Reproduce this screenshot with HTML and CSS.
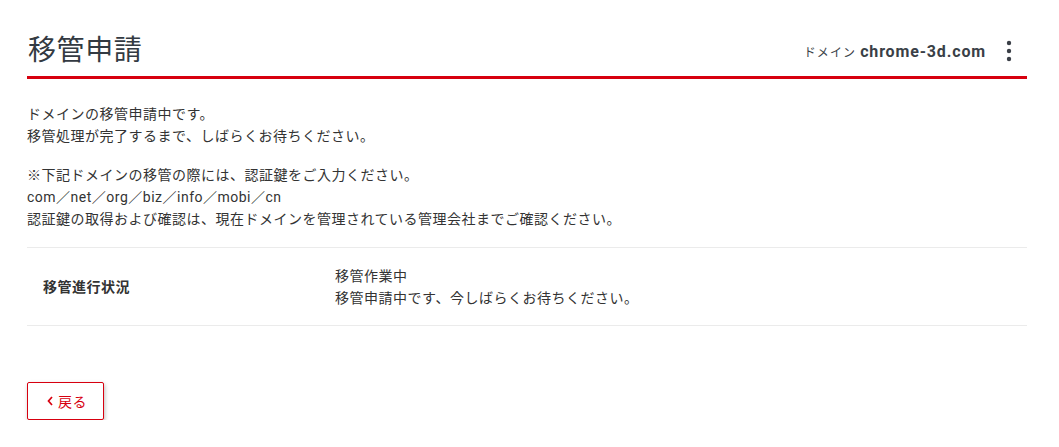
FILE: index.html
```html
<!DOCTYPE html>
<html lang="ja">
<head>
<meta charset="utf-8">
<link rel="stylesheet" href="styles.css">
</head>
<body>
<div class="page">
  <header class="head">
    <h1 class="title">移管申請</h1>
    <div class="domain">
      <span class="domain-label">ドメイン</span>
      <span class="domain-name">chrome-3d.com</span>
      <button class="kebab" aria-label="menu">
        <svg width="6" height="22" viewBox="0 0 6 22"><circle cx="3" cy="3" r="2.2" fill="#3a3f47"/><circle cx="3" cy="11" r="2.2" fill="#3a3f47"/><circle cx="3" cy="19" r="2.2" fill="#3a3f47"/></svg>
      </button>
    </div>
  </header>
  <div class="body">
    <p class="para">ドメインの移管申請中です。<br>移管処理が完了するまで、しばらくお待ちください。</p>
    <p class="para">※下記ドメインの移管の際には、認証鍵をご入力ください。<br>com／net／org／biz／info／mobi／cn<br>認証鍵の取得および確認は、現在ドメインを管理されている管理会社までご確認ください。</p>
    <table class="status">
      <tr>
        <th>移管進行状況</th>
        <td>移管作業中<br>移管申請中です、今しばらくお待ちください。</td>
      </tr>
    </table>
    <button class="back">
      <svg width="8" height="10" viewBox="0 0 8 10"><path d="M6 1 L2.5 5 L6 9" fill="none" stroke="#d7000f" stroke-width="1.7"/></svg>
      <span>戻る</span>
    </button>
  </div>
</div>
</body>
</html>
```
FILE: styles.css
```css
* { box-sizing: border-box; }
html, body { margin: 0; padding: 0; background: #fff; }
body {
  font-family: Roboto, "Noto Sans CJK JP", sans-serif;
  color: #333;
}
.page {
  width: 1000px;
  margin-left: 27px;
  padding-top: 28px;
}
.head {
  display: flex;
  align-items: center;
  justify-content: space-between;
  border-bottom: 3px solid #d7000f;
  height: 51px;
  padding-bottom: 2px;
}
.title {
  margin: 0;
  font-size: 28px;
  font-weight: 400;
  line-height: 40px;
  letter-spacing: 0.6px;
  padding-left: 1px;
  color: #333a42;
}
.domain {
  display: flex;
  align-items: center;
}
.domain-label {
  font-size: 12px;
  letter-spacing: 1.1px;
  color: #3a3f47;
  margin-right: 4px;
}
.domain-name {
  font-size: 16px;
  font-weight: 700;
  color: #3a3f47;
  letter-spacing: 0.85px;
}
.kebab {
  border: 0;
  background: none;
  padding: 0;
  margin-left: 18px;
  margin-right: 13px;
  width: 10px;
  height: 24px;
  display: flex;
  align-items: center;
  justify-content: center;
}
.body { padding-top: 24px; }
.para {
  margin: 0 0 17px;
  font-size: 14px;
  line-height: 22px;
  letter-spacing: 0.5px;
  color: #333;
}
.status {
  width: 100%;
  border-collapse: collapse;
  border-top: 1px solid #ebebeb;
  border-bottom: 1px solid #ebebeb;
}
.status th, .status td {
  font-size: 14px;
  line-height: 22px;
  letter-spacing: 0.5px;
  padding: 16px;
  height: 78px;
  vertical-align: middle;
  text-align: left;
}
.status th {
  width: 308px;
  font-weight: 700;
}
.status td { padding-left: 0; }
.back {
  margin-top: 56px;
  display: flex;
  align-items: center;
  justify-content: center;
  gap: 4px;
  width: 77px;
  height: 38px;
  border: 1px solid #d7000f;
  border-radius: 2px;
  background: #fff;
  color: #d7000f;
  font-family: Roboto, "Noto Sans CJK JP", sans-serif;
  font-size: 14px;
  letter-spacing: 0.5px;
  box-shadow: 1px 2px 4px rgba(0,0,0,0.25);
  padding: 0 0 0 2px;
}
```
